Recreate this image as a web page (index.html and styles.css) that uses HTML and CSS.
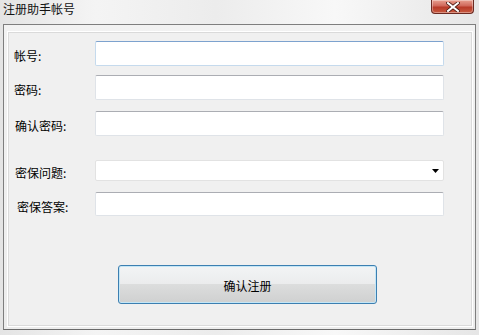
FILE: index.html
```html
<!DOCTYPE html>
<html>
<head>
<meta charset="utf-8">
<link rel="stylesheet" href="styles.css">
</head>
<body>
<div class="titlebar">
  <span class="title">注册助手帐号</span>
  <div class="close">
    <svg width="14" height="10" viewBox="0 0 14 10"><path d="M2 1 L12 9 M12 1 L2 9" stroke="#4a1a12" stroke-width="3.6" stroke-linecap="square"/><path d="M2 1 L12 9 M12 1 L2 9" stroke="#ffffff" stroke-width="2" stroke-linecap="square"/></svg>
  </div>
</div>
<div class="frame">
  <div class="client">
    <div class="row r1">
      <label class="lbl">帐号:</label>
      <div class="field focus"></div>
    </div>
    <div class="row r2">
      <label class="lbl">密码:</label>
      <div class="field"></div>
    </div>
    <div class="row r3">
      <label class="lbl l3">确认密码:</label>
      <div class="field"></div>
    </div>
    <div class="row r4">
      <label class="lbl l3">密保问题:</label>
      <div class="field combo">
        <svg class="arrow" width="7" height="4" viewBox="0 0 7 4"><path d="M0 0 H7 L3.5 4 Z" fill="#000"/></svg>
      </div>
    </div>
    <div class="row r5">
      <label class="lbl l5">密保答案:</label>
      <div class="field"></div>
    </div>
    <div class="btnrow">
      <div class="btn"><span>确认注册</span></div>
    </div>
  </div>
</div>
</body>
</html>
```
FILE: styles.css
```css
html, body {
  margin: 0;
  padding: 0;
}
body {
  width: 479px;
  height: 335px;
  overflow: hidden;
  font-family: "Noto Sans CJK SC", "Noto Sans", sans-serif;
  font-size: 12px;
  color: #000;
  background: linear-gradient(90deg, #e4e4e4 0%, #f4f4f4 20%, #ececec 45%, #f8f8f8 70%, #e6e6e6 100%);
}
.titlebar {
  height: 24px;
  display: flex;
  justify-content: space-between;
  align-items: flex-start;
}
.title {
  margin-left: 3px;
  margin-top: 1px;
  line-height: 16px;
  color: #111;
}
.close {
  width: 41px;
  height: 13px;
  margin-right: 5px;
  border: 1px solid #6b2a22;
  border-top: none;
  border-radius: 0 0 4px 4px;
  background: linear-gradient(180deg, #e8a090 0%, #d0685a 45%, #b83a28 55%, #c85a40 100%);
  display: flex;
  align-items: center;
  justify-content: center;
  box-shadow: inset 0 0 0 1px rgba(255,255,255,0.35);
}
.frame {
  margin: 0 3px;
  height: 306px;
  border: 1px solid #7e7e7e;
  border-bottom-color: #6a6a6a;
  padding: 6px 2px 2px 3px;
  background: linear-gradient(180deg, #f2f2f2, #ececec);
  box-sizing: border-box;
}
.client {
  height: 100%;
  box-sizing: border-box;
  border: 1px solid #ffffff;
  box-shadow: inset 0 0 0 1px #dadada;
  background: #f0f0f0;
  padding-top: 9px;
  display: flex;
  flex-direction: column;
}
.row {
  display: flex;
  align-items: center;
}
.lbl {
  width: 87px;
  padding-left: 6px;
  padding-top: 4px;
  box-sizing: border-box;
}
.l3 { padding-left: 7px; }
.l5 { padding-left: 9px; }
.field {
  width: 349px;
  height: 25px;
  box-sizing: border-box;
  background: #fff;
  border: 1px solid #dfe3e8;
  border-top-color: #abadb3;
  border-radius: 2px;
}
.field.focus {
  border-color: #c5daed;
  border-top-color: #7da2ce;
}
.r2 { margin-top: 9px; }
.r3 { margin-top: 11px; }
.r4 { margin-top: 24px; }
.r5 { margin-top: 11px; }
.combo {
  height: 21px;
  border-color: #e2e2e2;
  display: flex;
  align-items: center;
  justify-content: flex-end;
  padding-right: 4px;
}
.r5 .field { height: 24px; }
.btnrow {
  margin-top: 49px;
  padding-left: 110px;
}
.btn {
  width: 259px;
  height: 39px;
  box-sizing: border-box;
  border: 1px solid #3c7fb1;
  border-radius: 3px;
  box-shadow: inset 0 0 0 1px #c4e6f6;
  background: linear-gradient(180deg, #f2f4f5 0%, #ebeced 48%, #dcdddd 50%, #cfd0d0 100%);
  display: flex;
  align-items: center;
  justify-content: center;
}
.btn span {
  padding-top: 1px;
}
```
